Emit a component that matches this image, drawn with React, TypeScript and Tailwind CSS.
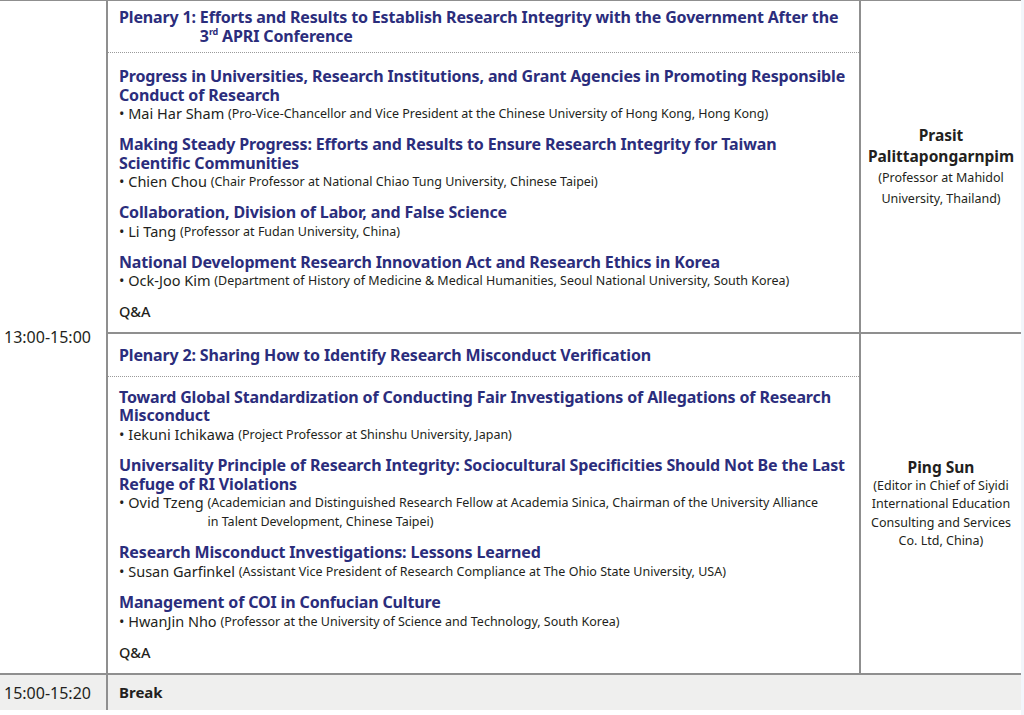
import React from "react";

const F = { fontFamily: "'Noto Sans', Roboto, sans-serif" };

function Talk({ title, name, desc }: { title: React.ReactNode; name: string; desc: React.ReactNode }) {
  return (
    <div>
      <div className="text-[#2b2d7c] font-bold text-[16px] leading-[18.5px] tracking-[-0.15px] whitespace-nowrap">{title}</div>
      <div className="flex items-start text-[#231f20] leading-[18.5px] whitespace-nowrap">
        <span className="text-[14.5px] whitespace-pre shrink-0">{"• " + name + " "}</span>
        <span className="text-[12.5px] relative top-[1px]">{desc}</span>
      </div>
    </div>
  );
}

function Header({ label, children }: { label: string; children: React.ReactNode }) {
  return (
    <div className="flex text-[#2b2d7c] font-bold text-[16px] leading-[18.5px] tracking-[-0.15px] whitespace-nowrap">
      <span className="whitespace-pre shrink-0">{label + " "}</span>
      <span>{children}</span>
    </div>
  );
}

export default function App() {
  return (
    <div className="w-[1024px] h-[715px] bg-white flex items-start" style={F}>
      <div className="w-[1021px] flex flex-col">
        <div className="flex border-t border-[#8f8f8f]">
          <div className="w-[108px] shrink-0 border-r-2 border-[#8f8f8f] flex items-center pl-[4px] text-[16px] text-[#231f20]">
            13:00-15:00
          </div>
          <div className="flex-1 flex flex-col">
            {/* Row 1 */}
            <div className="flex border-b-2 border-[#8f8f8f] h-[333px]">
              <div className="w-[751px] shrink-0 flex flex-col">
                <div className="pl-[11px] pt-[7px] pb-[7px] border-b border-dotted border-[#9a9a9a]">
                  <Header label="Plenary 1:">
                    Efforts and Results to Establish Research Integrity with the Government After the
                    <br />3<sup className="text-[9px] top-[-7px]">rd</sup> APRI Conference
                  </Header>
                </div>
                <div className="pl-[11px] pt-[14px] flex flex-col gap-[12.5px]">
                  <Talk
                    title={<>Progress in Universities, Research Institutions, and Grant Agencies in Promoting Responsible<br />Conduct of Research</>}
                    name="Mai Har Sham"
                    desc="(Pro-Vice-Chancellor and Vice President at the Chinese University of Hong Kong, Hong Kong)"
                  />
                  <Talk
                    title={<>Making Steady Progress: Efforts and Results to Ensure Research Integrity for Taiwan<br />Scientific Communities</>}
                    name="Chien Chou"
                    desc="(Chair Professor at National Chiao Tung University, Chinese Taipei)"
                  />
                  <Talk
                    title="Collaboration, Division of Labor, and False Science"
                    name="Li Tang"
                    desc="(Professor at Fudan University, China)"
                  />
                  <Talk
                    title="National Development Research Innovation Act and Research Ethics in Korea"
                    name="Ock-Joo Kim"
                    desc="(Department of History of Medicine & Medical Humanities, Seoul National University, South Korea)"
                  />
                  <div className="text-[14.5px] leading-[18.5px] text-[#231f20] font-medium">Q&amp;A</div>
                </div>
              </div>
              <div className="flex-1 border-l-2 border-[#8f8f8f] flex flex-col items-center justify-center text-center text-[#231f20]">
                <div className="font-bold text-[15.5px] leading-[21px]">Prasit<br />Palittapongarnpim</div>
                <div className="text-[12.5px] leading-[21px]">(Professor at Mahidol<br />University, Thailand)</div>
              </div>
            </div>
            {/* Row 2 */}
            <div className="flex h-[339px]">
              <div className="w-[751px] shrink-0 flex flex-col">
                <div className="pl-[11px] pt-[12px] pb-[11px] border-b border-dotted border-[#9a9a9a]">
                  <Header label="Plenary 2:">Sharing How to Identify Research Misconduct Verification</Header>
                </div>
                <div className="pl-[11px] pt-[11px] flex flex-col gap-[13px]">
                  <Talk
                    title={<>Toward Global Standardization of Conducting Fair Investigations of Allegations of Research<br />Misconduct</>}
                    name="Iekuni Ichikawa"
                    desc="(Project Professor at Shinshu University, Japan)"
                  />
                  <Talk
                    title={<>Universality Principle of Research Integrity: Sociocultural Specificities Should Not Be the Last<br />Refuge of RI Violations</>}
                    name="Ovid Tzeng"
                    desc={<>(Academician and Distinguished Research Fellow at Academia Sinica, Chairman of the University Alliance<br />in Talent Development, Chinese Taipei)</>}
                  />
                  <Talk
                    title="Research Misconduct Investigations: Lessons Learned"
                    name="Susan Garfinkel"
                    desc="(Assistant Vice President of Research Compliance at The Ohio State University, USA)"
                  />
                  <Talk
                    title="Management of COI in Confucian Culture"
                    name="HwanJin Nho"
                    desc="(Professor at the University of Science and Technology, South Korea)"
                  />
                  <div className="text-[14.5px] leading-[18.5px] text-[#231f20] font-medium">Q&amp;A</div>
                </div>
              </div>
              <div className="flex-1 border-l-2 border-[#8f8f8f] flex flex-col items-center justify-center text-center text-[#231f20]">
                <div className="font-bold text-[15.5px] leading-[20px]">Ping Sun</div>
                <div className="text-[12.5px] leading-[18.5px]">(Editor in Chief of Siyidi<br />International Education<br />Consulting and Services<br />Co. Ltd, China)</div>
              </div>
            </div>
          </div>
        </div>
        <div className="flex border-t-2 border-[#8f8f8f] bg-[#efefee] h-[37px] items-center text-[#231f20]">
          <div className="w-[108px] shrink-0 border-r-2 border-[#8f8f8f] h-full flex items-center pl-[4px] text-[16px]">
            15:00-15:20
          </div>
          <div className="pl-[11px] font-bold text-[15px]">Break</div>
        </div>
      </div>
      <div className="flex-1 self-stretch bg-[#f2f6fb]" />
    </div>
  );
}
